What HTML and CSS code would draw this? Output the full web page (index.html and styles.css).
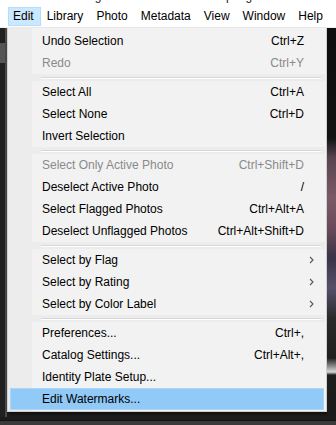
FILE: index.html
```html
<!DOCTYPE html>
<html>
<head>
<meta charset="utf-8">
<link rel="stylesheet" href="styles.css">
</head>
<body>
<div class="titlebar"><span class="title">Catalog.lrcat - Adobe Photoshop Lightroom Classic - Library</span></div>
<div class="menubar">
  <span class="mb-item active">Edit</span>
  <span class="mb-item">Library</span>
  <span class="mb-item">Photo</span>
  <span class="mb-item">Metadata</span>
  <span class="mb-item">View</span>
  <span class="mb-item">Window</span>
  <span class="mb-item">Help</span>
</div>
<div class="workspace">
  <div class="side left"><div class="logo-chunk"></div></div>
  <div class="menu">
    <div class="row"><span class="label">Undo Selection</span><span class="key">Ctrl+Z</span><span class="arrow"></span></div>
    <div class="row disabled"><span class="label">Redo</span><span class="key">Ctrl+Y</span><span class="arrow"></span></div>
    <div class="sep"></div>
    <div class="row"><span class="label">Select All</span><span class="key">Ctrl+A</span><span class="arrow"></span></div>
    <div class="row"><span class="label">Select None</span><span class="key">Ctrl+D</span><span class="arrow"></span></div>
    <div class="row"><span class="label">Invert Selection</span><span class="key"></span><span class="arrow"></span></div>
    <div class="sep"></div>
    <div class="row disabled"><span class="label">Select Only Active Photo</span><span class="key">Ctrl+Shift+D</span><span class="arrow"></span></div>
    <div class="row"><span class="label">Deselect Active Photo</span><span class="key">/</span><span class="arrow"></span></div>
    <div class="row"><span class="label">Select Flagged Photos</span><span class="key">Ctrl+Alt+A</span><span class="arrow"></span></div>
    <div class="row"><span class="label">Deselect Unflagged Photos</span><span class="key">Ctrl+Alt+Shift+D</span><span class="arrow"></span></div>
    <div class="sep"></div>
    <div class="row"><span class="label">Select by Flag</span><span class="key"></span><span class="arrow"><svg width="5" height="8" viewBox="0 0 5 8"><path d="M1 1 L4 4 L1 7" fill="none" stroke="#555" stroke-width="1.1"/></svg></span></div>
    <div class="row"><span class="label">Select by Rating</span><span class="key"></span><span class="arrow"><svg width="5" height="8" viewBox="0 0 5 8"><path d="M1 1 L4 4 L1 7" fill="none" stroke="#555" stroke-width="1.1"/></svg></span></div>
    <div class="row"><span class="label">Select by Color Label</span><span class="key"></span><span class="arrow"><svg width="5" height="8" viewBox="0 0 5 8"><path d="M1 1 L4 4 L1 7" fill="none" stroke="#555" stroke-width="1.1"/></svg></span></div>
    <div class="sep"></div>
    <div class="row"><span class="label">Preferences...</span><span class="key">Ctrl+,</span><span class="arrow"></span></div>
    <div class="row"><span class="label">Catalog Settings...</span><span class="key">Ctrl+Alt+,</span><span class="arrow"></span></div>
    <div class="row"><span class="label">Identity Plate Setup...</span><span class="key"></span><span class="arrow"></span></div>
    <div class="row hover"><span class="label">Edit Watermarks...</span><span class="key"></span><span class="arrow"></span></div>
  </div>
  <div class="side right"></div>
</div>
<div class="bottombar">
  <svg class="folder" width="16" height="12" viewBox="0 0 16 12"><path d="M1 3 H6 L7 1.5 H15 V12 H1 Z" fill="#8a8a8a"/></svg>
  <span class="foldername">2020-07-29 - Michal &amp; Idan Everything For Free Video</span>
</div>
</body>
</html>
```
FILE: styles.css
```css
html, body {
  margin: 0;
  padding: 0;
}
body {
  width: 336px;
  height: 425px;
  overflow: hidden;
  background: #1c1c1c;
  font-family: "Liberation Sans", Arial, sans-serif;
  font-size: 12px;
  color: #000;
}
.titlebar {
  height: 5px;
  background: #fff;
  overflow: hidden;
}
.title {
  display: block;
  margin-top: -11px;
  padding-left: 60px;
  font-size: 12px;
  line-height: 14px;
  color: #222;
  white-space: nowrap;
}
.menubar {
  height: 22px;
  background: #fff;
  display: flex;
  align-items: center;
  padding-left: 8px;
  border-bottom: 1px solid #f0f0f0;
  white-space: nowrap;
  overflow: hidden;
}
.mb-item {
  padding: 0 6px 0 4px;
  height: 19px;
  line-height: 17px;
  margin-right: 1px;
  border: 1px solid transparent;
  box-sizing: border-box;
  flex: none;
}
.mb-item.active {
  background: #cce8ff;
  border-color: #b5dcfb;
}
.workspace {
  display: flex;
  height: 389px;
}
.side.left {
  width: 5px;
  background: #202020;
  border-right: 2px solid #4a4a4a;
}
.logo-chunk {
  margin-top: 15px;
  height: 20px;
  width: 5px;
  background: #555;
}
.side.right {
  width: 9px;
  background: linear-gradient(to bottom, #0e0e0e 0px, #121212 110px, #5a4450 130px, #7a5a66 170px, #6a4a5a 200px, #3c3448 230px, #56506a 260px, #2a2a2a 290px, #1e1e1e 330px, #d8d8d8 344px, #1e1e1e 347px, #1a1a1a 389px);
}
.menu {
  width: 320px;
  box-sizing: border-box;
  border: 1px solid #cfcfcf;
  border-top: none;
  background: linear-gradient(to right, #ececec 0, #ececec 24px, #f2f2f2 24px);
  padding: 2px 1px 1px 1px;
  align-self: flex-start;
  box-shadow: 2px 2px 3px rgba(0, 0, 0, 0.5);
}
.row {
  height: 22px;
  display: grid;
  grid-template-columns: 1fr auto 19px;
  align-items: center;
  border: 1px solid transparent;
  box-sizing: border-box;
  margin: 0 1px;
  padding-left: 31px;
  white-space: nowrap;
}
.row.disabled {
  color: #8a8a8a;
}
.row.hover {
  background: #91c9f7;
  border-color: #a9d5f8;
}
.key {
  text-align: right;
}
.arrow {
  display: flex;
  align-items: center;
  justify-content: flex-start;
  padding-left: 5px;
}
.sep {
  height: 7px;
  position: relative;
  background: #ececec;
}
.sep::after {
  content: "";
  position: absolute;
  left: 32px;
  right: 4px;
  top: 3px;
  height: 1px;
  background: #d7d7d7;
  border-bottom: 1px solid #fff;
}
.bottombar {
  margin-top: 3px;
  height: 13px;
  background: #3a3a3a;
  border-top: 1px solid #111;
  display: flex;
  align-items: flex-start;
  padding-left: 37px;
  overflow: hidden;
}
.folder {
  margin-top: 3px;
  flex: none;
}
.foldername {
  margin-left: 10px;
  margin-top: 2px;
  color: #cfcfcf;
  font-size: 12px;
  line-height: 14px;
  white-space: nowrap;
}
```
